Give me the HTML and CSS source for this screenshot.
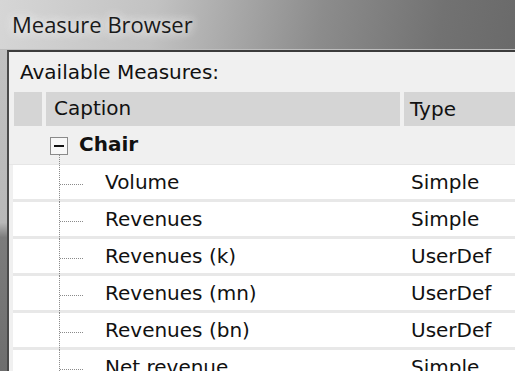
FILE: index.html
```html
<!DOCTYPE html>
<html lang="en">
<head>
    <meta charset="UTF-8">
    <meta name="viewport" content="width=device-width, initial-scale=1.0">
    <title>Measure Browser</title>
    <link rel="stylesheet" href="styles.css">
</head>
<body>
    <div class="titlebar">Measure Browser</div>
    <div class="window">
        <div class="label">Available Measures:</div>
        <div class="grid-head">
            <div class="head-cell"></div>
            <div class="head-cell">Caption</div>
            <div class="head-cell type">Type</div>
        </div>
        <div class="group">
            <div class="toggle">
                <span class="box"><span class="minus"></span></span>
                <span class="stem"></span>
            </div>
            <span class="group-name">Chair</span>
        </div>
        <div class="rows">
            <div class="row"><span class="indent"></span><span class="branch"></span><span class="caption">Volume</span><span class="type">Simple</span></div>
            <div class="row"><span class="indent"></span><span class="branch"></span><span class="caption">Revenues</span><span class="type">Simple</span></div>
            <div class="row"><span class="indent"></span><span class="branch"></span><span class="caption">Revenues (k)</span><span class="type">UserDef</span></div>
            <div class="row"><span class="indent"></span><span class="branch"></span><span class="caption">Revenues (mn)</span><span class="type">UserDef</span></div>
            <div class="row"><span class="indent"></span><span class="branch"></span><span class="caption">Revenues (bn)</span><span class="type">UserDef</span></div>
            <div class="row"><span class="indent"></span><span class="branch"></span><span class="caption">Net revenue</span><span class="type">Simple</span></div>
        </div>
    </div>
</body>
</html>
```

FILE: styles.css
```css
body {
    margin: 0;
    height: 371px;
    overflow: hidden;
    font-family: "DejaVu Sans", Verdana, sans-serif;
    font-size: 20px;
    color: #111;
    background: linear-gradient(to bottom, #c4c4c4 0, #b8b8b8 60%, #7c7c7c 64%, #6e6e6e 100%);
}
.titlebar {
    height: 50px;
    box-sizing: border-box;
    padding: 9px 0 0 12px;
    font-family: "Open Sans", sans-serif;
    font-size: 22px;
    color: #1a1a1a;
    text-shadow: 0 0 8px #eee, 0 0 12px #eee;
    background: linear-gradient(100deg, #d6d6d6 0%, #c2c2c2 30%, #8c8c8c 62%, #727272 85%, #6a6a6a 100%);
    border-bottom: 1px solid #bdbdbd;
}
.window {
    margin-left: 7px;
    height: 320px;
    border-top: 2px solid #3c3c3c;
    border-left: 2px solid #4a4a4a;
    background-color: #f0f0f0;
    overflow: hidden;
}
.label {
    height: 40px;
    line-height: 40px;
    padding-left: 11px;
}
.grid-head {
    display: grid;
    grid-template-columns: 28px 354px 1fr;
    column-gap: 4px;
    height: 32px;
    margin-left: 5px;
}
.head-cell {
    background-color: #d5d5d5;
    line-height: 32px;
    padding-left: 8px;
}
.head-cell.type {
    padding-left: 6px;
}
.group {
    display: flex;
    height: 40px;
    border-bottom: 1px solid #e6e6e6;
}
.toggle {
    display: flex;
    flex-direction: column;
    padding-left: 41px;
    padding-top: 13px;
}
.box {
    width: 16px;
    height: 16px;
    border: 1px solid #8a8a8a;
    background-color: #f7f7f7;
    display: flex;
    align-items: center;
    justify-content: center;
}
.minus {
    width: 10px;
    height: 2px;
    background-color: #111;
}
.stem {
    flex: 1;
    margin-left: 9px;
    border-left: 1px dotted #8a8a8a;
}
.group-name {
    font-weight: bold;
    margin-left: 11px;
    line-height: 40px;
}
.row {
    display: flex;
    height: 34px;
    margin-left: 4px;
    background-color: #fff;
    border-bottom: 3px solid #e8e8e8;
}
.indent {
    width: 46px;
}
.branch {
    width: 45px;
    margin-bottom: -3px;
    border-left: 1px dotted #8a8a8a;
    display: flex;
    align-items: center;
}
.branch::before {
    content: "";
    width: 23px;
    margin-top: 2px;
    border-top: 1px dotted #8a8a8a;
}
.caption {
    width: 306px;
    line-height: 34px;
}
.type {
    padding-left: 0;
    line-height: 34px;
}
```
